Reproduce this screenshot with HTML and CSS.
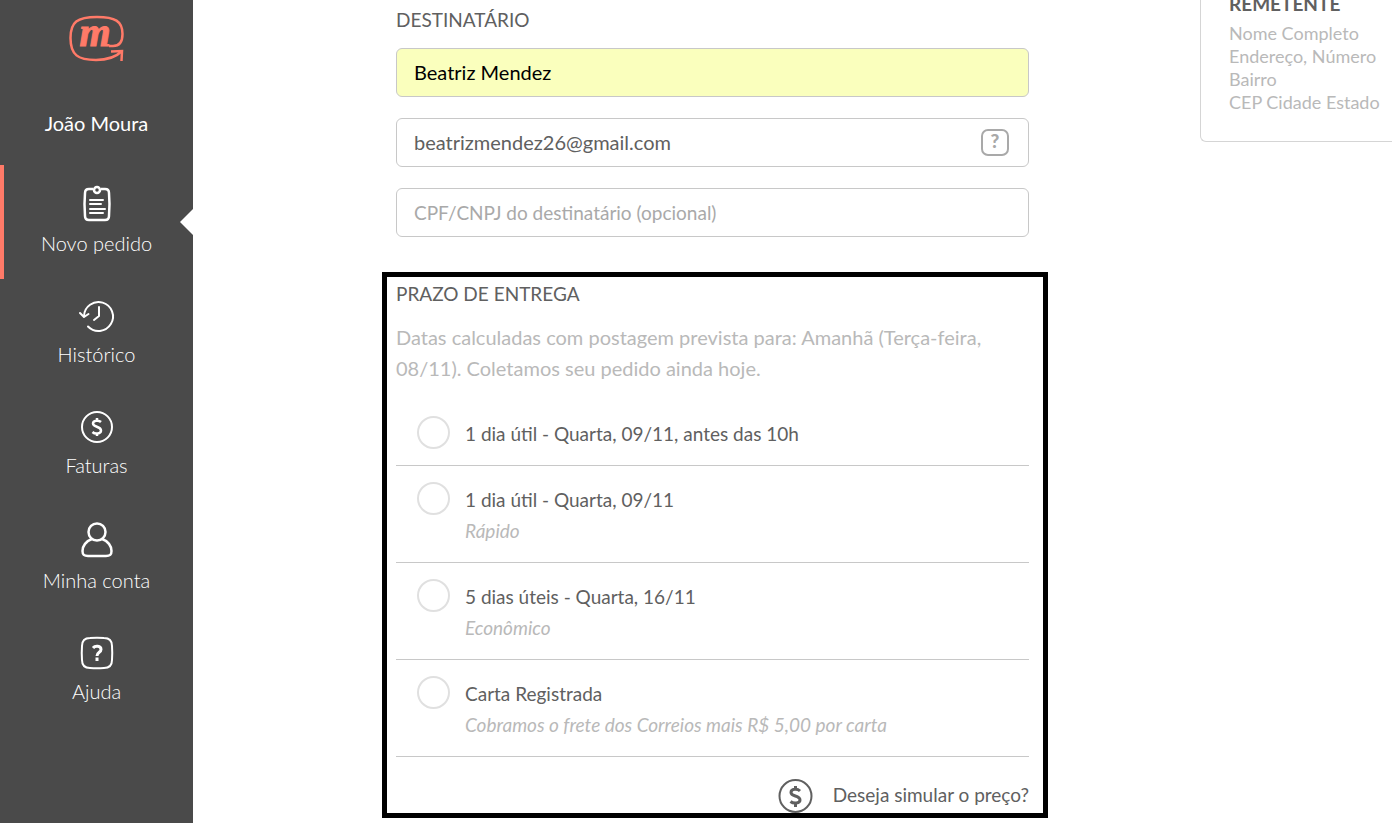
FILE: index.html
```html
<!DOCTYPE html>
<html lang="pt-BR">
<head>
	<meta charset="utf-8">
	<meta name="viewport" content="width=device-width, initial-scale=1.0">
	<title>Novo pedido</title>
	<link rel="stylesheet" href="styles.css">
</head>
<body>
	<div class="page">
		<nav class="sidebar">
			<a href="#" class="logo" aria-label="Início">
				<svg width="56" height="48" viewBox="0 0 56 48" fill="none" stroke="#ff7a68" stroke-width="2.500">
					<path d="M40 31H44C51 31 53.500 26 53.500 19C53.500 6 46 2 28 2C8 2 1.500 7 1.500 23C1.500 40 9 45 27 45C40 45 47 42 53 36"/>
					<path d="M42 36.500L53 36L52.500 46"/>
					<text class="logo-letter" x="26" y="31" text-anchor="middle">m</text>
				</svg>
			</a>
			<p class="user-name">João Moura</p>
			<ul class="menu">
				<li>
					<a href="#" class="menu-item active">
						<svg width="28" height="35" viewBox="0 0 28 35" fill="none" stroke="#fff" stroke-width="2.500">
							<path d="M10 3H6Q2 3 2 7Q1 18 2 30Q2 34 6 34Q14 34 22 34Q26 34 26 30Q27 18 26 7Q26 3 22 3H18"/>
							<circle cx="14" cy="4" r="3"/>
							<path d="M7 14H20M7 18H18M7 23H22M7 27H20" stroke-width="2" stroke-linecap="round"/>
						</svg>
						<span>Novo pedido</span>
					</a>
				</li>
				<li>
					<a href="#" class="menu-item">
						<svg width="36" height="32" viewBox="0 0 36 32" fill="none" stroke="#fff" stroke-width="2" stroke-linecap="round" stroke-linejoin="round">
							<path d="M5 16A14.500 14.500 0 1 1 9 26.500"/>
							<path d="M1 13L5 17L9.500 14M20 7V16L15 20"/>
						</svg>
						<span>Histórico</span>
					</a>
				</li>
				<li>
					<a href="#" class="menu-item">
						<svg width="32" height="32" viewBox="0 0 32 32" fill="none" stroke="#fff" stroke-width="2">
							<circle cx="16" cy="16" r="15"/>
							<path d="M20 11C18 9 12 9 12 12.500C12 16.500 20 15 20 19.500C20 23 14 23.500 11.500 21M16 7V10M16 22V25" stroke-width="2.500"/>
						</svg>
						<span>Faturas</span>
					</a>
				</li>
				<li>
					<a href="#" class="menu-item">
						<svg width="32" height="36" viewBox="0 0 32 36" fill="none" stroke="#fff" stroke-width="2.500">
							<circle cx="16" cy="10" r="8.500"/>
							<path d="M11 17C5 19 1.500 24 1.500 29C1.500 33 3 34 7 34H25C29 34 30.500 33 30.500 29C30.500 24 27 19 21 17"/>
						</svg>
						<span>Minha conta</span>
					</a>
				</li>
				<li>
					<a href="#" class="menu-item">
						<svg width="32" height="32" viewBox="0 0 32 32" fill="none" stroke="#fff" stroke-width="2">
							<path d="M9 1Q16 0.500 23 1Q31 1 31 9Q31.500 16 31 23Q31 31 23 31Q16 31.500 9 31Q1 31 1 23Q0.500 16 1 9Q1 1 9 1Z"/>
							<path d="M12 11C14 8.500 20 8.500 20 12.500C20 15.500 16 15 16 19M16 20.500V24" stroke-width="3"/>
						</svg>
						<span>Ajuda</span>
					</a>
				</li>
			</ul>
		</nav>

		<main class="content">
			<form class="order">
				<section class="recipient">
					<h2>DESTINATÁRIO</h2>
					<input type="text" class="field autofilled" value="Beatriz Mendez" aria-label="Nome do destinatário">
					<div class="field-wrap">
						<input type="email" class="field" value="beatrizmendez26@gmail.com" aria-label="E-mail do destinatário">
						<button type="button" class="help">?</button>
					</div>
					<input type="text" class="field" placeholder="CPF/CNPJ do destinatário (opcional)" aria-label="CPF/CNPJ do destinatário">
				</section>

				<section class="delivery">
					<h2>PRAZO DE ENTREGA</h2>
					<p class="note">Datas calculadas com postagem prevista para: Amanhã (Terça-feira, 08/11). Coletamos seu pedido ainda hoje.</p>
					<label class="option">
						<input type="radio" name="prazo">
						<span class="option-text">1 dia útil - Quarta, 09/11, antes das 10h</span>
					</label>
					<label class="option">
						<input type="radio" name="prazo">
						<span class="option-text">1 dia útil - Quarta, 09/11<em>Rápido</em></span>
					</label>
					<label class="option">
						<input type="radio" name="prazo">
						<span class="option-text">5 dias úteis - Quarta, 16/11<em>Econômico</em></span>
					</label>
					<label class="option">
						<input type="radio" name="prazo">
						<span class="option-text">Carta Registrada<em>Cobramos o frete dos Correios mais R$ 5,00 por carta</em></span>
					</label>
					<a href="#" class="simulate">
						<svg width="35" height="34" viewBox="0 0 35 34" fill="none" stroke="#606060" stroke-width="2">
							<circle cx="17.500" cy="17" r="16"/>
							<path d="M22 12C19.500 9.500 13 9.500 13 13.500C13 18 22 16 22 21C22 24.500 15.500 25 12.500 22.500M17.500 7V11M17.500 24V28" stroke-width="3"/>
						</svg>
						<span>Deseja simular o preço?</span>
					</a>
				</section>
			</form>

			<aside class="sender">
				<h3>REMETENTE</h3>
				<address>Nome Completo<br>Endereço, Número<br>Bairro<br>CEP Cidade Estado</address>
			</aside>
		</main>
	</div>
</body>
</html>
```

FILE: styles.css
```css
* {
	box-sizing: border-box;
}
body {
	margin: 0;
	background-color: white;
	color: #606060;
	font-family: Lato, "Liberation Sans", sans-serif;
	font-size: 20px;
	line-height: 31px;
}
h2, h3, p, ul {
	margin: 0;
	padding: 0;
}
a {
	color: inherit;
	text-decoration: none;
}
svg {
	display: block;
	flex-shrink: 0;
	overflow: visible;
}
.page {
	display: flex;
	min-height: 100vh;
}

/* sidebar */
.sidebar {
	width: 193px;
	flex-shrink: 0;
	background-color: #4a4a4a;
	color: white;
	text-align: center;
}
.logo {
	display: flex;
	justify-content: center;
	padding-top: 15px;
}
.logo-letter {
	font: italic bold 40px "Liberation Serif", serif;
	fill: #ff7a68;
	stroke-width: 1px;
}
.user-name {
	padding: 45px 0 26px;
}
.menu {
	list-style: none;
	font-weight: 300;
	line-height: 26px;
}
.menu-item {
	display: flex;
	flex-direction: column;
	align-items: center;
	gap: 9px;
	padding: 21px 0 23px;
}
.menu-item.active {
	position: relative;
	box-shadow: inset 4px 0 #ff7a68;
}
.menu-item.active::after {
	content: "";
	position: absolute;
	right: 0;
	top: 44px;
	border: 13px solid transparent;
	border-left: none;
	border-right-color: white;
}

/* order form */
.content {
	flex: 1;
	display: grid;
	grid-template-columns: minmax(0, 1fr) 192px;
	gap: 152px;
	align-items: start;
	padding-left: 189px;
}
h2 {
	font-size: 19px;
	font-weight: normal;
	line-height: 24px;
}
.recipient {
	display: flex;
	flex-direction: column;
	gap: 21px;
	padding: 8px 19px 35px 14px;
}
.recipient h2 {
	margin-bottom: -5px;
}
.field {
	display: block;
	width: 100%;
	height: 49px;
	padding: 0 17px 2px;
	border: 1px solid #c8c8c8;
	border-radius: 6px;
	background-color: white;
	color: #606060;
	font: inherit;
}
.field::placeholder {
	color: #a9a9a9;
	font-size: 19px;
}
.field.autofilled {
	background-color: #faffbd;
	color: black;
}
.field-wrap {
	position: relative;
}
.help {
	position: absolute;
	top: 11px;
	right: 20px;
	width: 28px;
	height: 27px;
	padding: 0 0 4px;
	border: 2px solid #a9a9a9;
	border-radius: 7px;
	background: none;
	color: #a9a9a9;
	font: 900 19px/19px Lato, sans-serif;
	cursor: pointer;
}
.delivery {
	border: 5px solid black;
	padding: 5px 14px 0 9px;
}
.note {
	margin: 16px 0;
	color: #b9b9b9;
}
.option {
	display: flex;
	gap: 15px;
	padding: 16px 0 16px 21px;
	border-bottom: 1px solid #c8c8c8;
	font-size: 19px;
	cursor: pointer;
}
.option input {
	appearance: none;
	flex-shrink: 0;
	width: 33px;
	height: 33px;
	margin: 0;
	border: 2px solid #e0e0e0;
	border-radius: 50%;
}
.option input:checked {
	background-color: #ff7a68;
}
.option-text {
	padding-top: 2px;
}
.option em {
	display: block;
	color: #b9b9b9;
}
.simulate {
	display: flex;
	justify-content: flex-end;
	gap: 20px;
	padding-top: 22px;
	font-size: 19px;
}

/* sender card, runs past the right edge */
.sender {
	margin-top: -20px;
	padding: 11px 0 27px 28px;
	border: 1px solid #d5d5d5;
	border-right: none;
	border-bottom-left-radius: 6px;
	white-space: nowrap;
}
.sender h3 {
	margin-bottom: 7px;
	font-size: 19px;
	line-height: 23px;
}
.sender address {
	color: #b9b9b9;
	font-size: 18px;
	font-style: normal;
	line-height: 23px;
}
```
